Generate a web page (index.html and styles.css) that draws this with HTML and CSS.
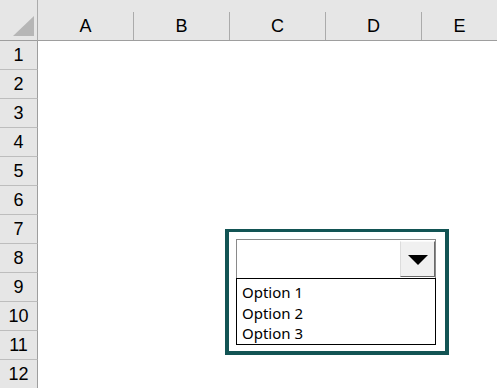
FILE: index.html
```html
<!DOCTYPE html>
<html>
<head>
<meta charset="utf-8">
<link rel="stylesheet" href="styles.css">
</head>
<body>
<div class="sheet">
  <div class="corner"><div class="corner-tri"></div></div>
  <div class="colhead"><span>A</span></div>
  <div class="colhead"><span>B</span></div>
  <div class="colhead"><span>C</span></div>
  <div class="colhead"><span>D</span></div>
  <div class="colhead last"><span>E</span></div>

  <div class="rowhead">1</div><div class="cells"></div>
  <div class="rowhead">2</div><div class="cells"></div>
  <div class="rowhead">3</div><div class="cells"></div>
  <div class="rowhead">4</div><div class="cells"></div>
  <div class="rowhead">5</div><div class="cells"></div>
  <div class="rowhead">6</div><div class="cells"></div>
  <div class="rowhead">7</div><div class="cells"></div>
  <div class="rowhead">8</div><div class="cells"></div>
  <div class="rowhead">9</div><div class="cells"></div>
  <div class="rowhead">10</div><div class="cells"></div>
  <div class="rowhead">11</div><div class="cells"></div>
  <div class="rowhead">12</div><div class="cells"></div>

  <div class="control">
    <div class="combo">
      <div class="combo-field"></div>
      <div class="combo-btn"><span class="arrow"></span></div>
    </div>
    <ul class="list">
      <li>Option 1</li>
      <li>Option 2</li>
      <li>Option 3</li>
    </ul>
  </div>
</div>
</body>
</html>
```

FILE: styles.css
```css
html, body {
  margin: 0;
  padding: 0;
  background: #ffffff;
}
body {
  width: 497px;
  height: 388px;
  overflow: hidden;
}
.sheet {
  position: relative;
  display: grid;
  grid-template-columns: 38px 96px 96px 96px 96px 75px;
  grid-template-rows: 41px repeat(12, 29px);
  font-family: "Liberation Sans", Arial, sans-serif;
  color: #000;
}
.corner {
  background: #e6e6e6;
  border-bottom: 1px solid #9e9e9e;
  border-right: 1px solid #ababab;
  box-sizing: border-box;
  display: flex;
  flex-direction: column;
  justify-content: flex-end;
  padding: 0 2px 4px 13px;
}
.corner-tri {
  width: 21px;
  height: 20px;
  background: #b6b6b6;
  clip-path: polygon(100% 0, 100% 100%, 0 100%);
}
.colhead {
  background: #e6e6e6;
  border-bottom: 1px solid #9e9e9e;
  box-sizing: border-box;
  padding-top: 12px;
  display: flex;
}
.colhead span {
  flex: 1;
  display: flex;
  align-items: center;
  justify-content: center;
  border-right: 1px solid #ababab;
  font-size: 18px;
  padding-top: 1px;
}
.colhead.last span {
  border-right: none;
}
.rowhead {
  grid-column: 1;
  background: #e6e6e6;
  border-bottom: 1px solid #bdbdbd;
  border-right: 1px solid #9e9e9e;
  box-sizing: border-box;
  display: flex;
  align-items: center;
  justify-content: center;
  font-size: 18px;
  padding-top: 1px;
}
.cells {
  grid-column: 2 / 7;
  background: #fff;
}
.control {
  position: absolute;
  left: 225px;
  top: 229px;
  width: 224px;
  height: 126px;
  box-sizing: border-box;
  border: 3px solid #125454;
  border-width: 3px 4px 4px 4px;
  background: #fff;
  padding: 7px 9px 6px 7px;
  font-family: "Noto Sans", "Open Sans", sans-serif;
}
.combo {
  display: flex;
  height: 39px;
  box-sizing: border-box;
  border: 1px solid #8a8a8a;
  border-bottom: none;
  padding: 1px 0 1px 0;
}
.combo-field {
  flex: 1;
}
.combo-btn {
  width: 35px;
  box-sizing: border-box;
  background: #f0f0f0;
  border-left: 1px solid #dcdcdc;
  border-top: 1px solid #fafafa;
  border-right: 1px solid #6a6a6a;
  border-bottom: 1px solid #6a6a6a;
  display: flex;
  align-items: center;
  justify-content: center;
  padding-top: 2px;
}
.arrow {
  width: 0;
  height: 0;
  border-left: 10px solid transparent;
  border-right: 10px solid transparent;
  border-top: 10px solid #000;
}
.list {
  list-style: none;
  margin: 0;
  padding: 3px 0 0 5px;
  border: 1px solid #000;
  font-size: 15px;
  line-height: 20.5px;
  height: 67px;
  box-sizing: border-box;
}
.list li {
  margin: 0;
  padding: 0;
}
```
